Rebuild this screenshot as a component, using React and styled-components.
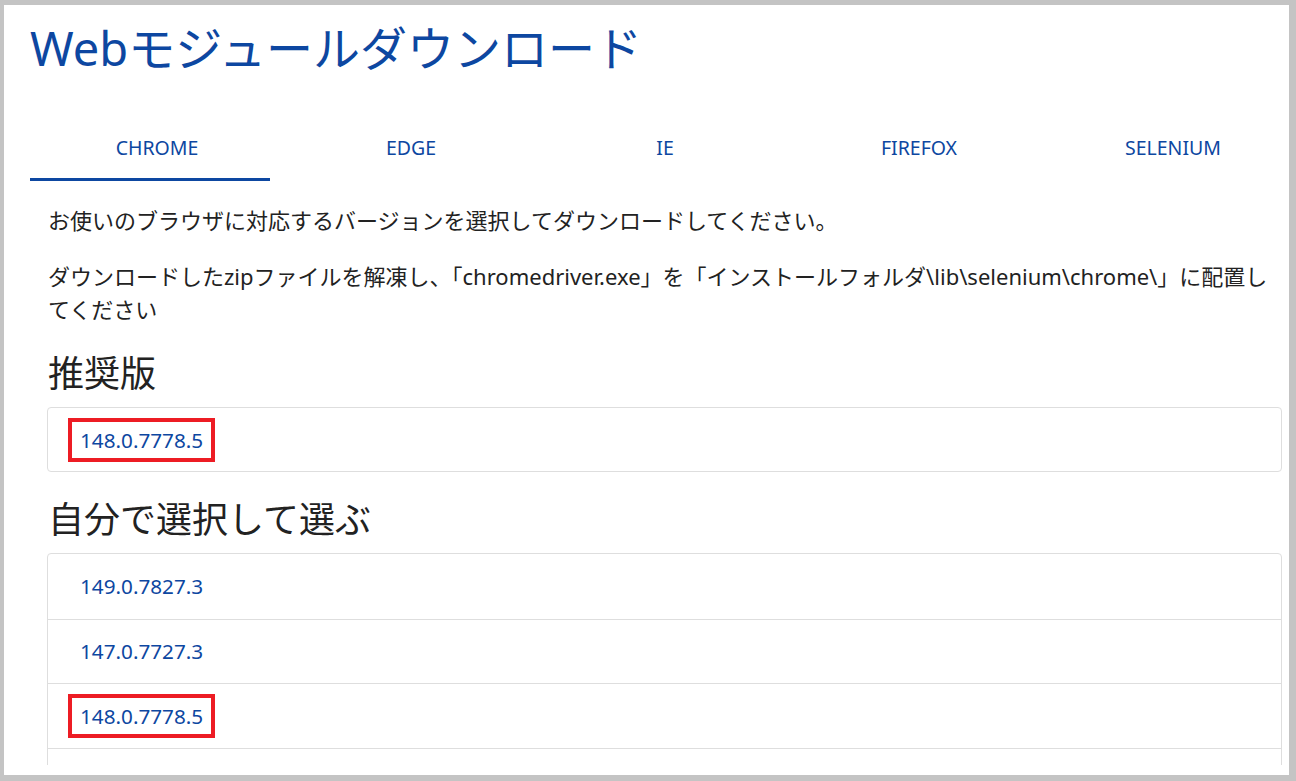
import React from 'react';
import styled, {createGlobalStyle, css} from 'styled-components';

const GlobalStyle = createGlobalStyle`
  * { box-sizing: border-box; }
  body {
    margin: 0;
    background: #ffffff;
    font-family: "Noto Sans", "Noto Sans CJK JP", sans-serif;
  }
`

const Frame = styled.div`
  width: 1296px;
  height: 781px;
  border-style: solid;
  border-color: #c4c4c4;
  border-width: 5px 7px 6px 4px;
  background: #ffffff;
  padding-bottom: 10px;
`

const Viewport = styled.div`
  height: 100%;
  overflow: hidden;
`

const Title = styled.h1`
  margin: 13px 0 0;
  padding-left: 26px;
  font-size: 47px;
  line-height: 60px;
  font-weight: 400;
  color: #0d47a1;
`

const TabBar = styled.div`
  display: flex;
  margin: 31px 0 0 26px;
`

const Tab = styled.div`
  position: relative;
  flex: 0 0 254px;
  height: 72px;
  padding-top: 4px;
  display: flex;
  align-items: center;
  justify-content: center;
  font-size: 19.5px;
  color: #0d47a1;
  text-transform: uppercase;

  ${props => props.active && css`
    &::after {
      content: "";
      position: absolute;
      left: 0;
      bottom: 0;
      width: 240px;
      height: 3px;
      background: #0d47a1;
    }
  `}
`

const Body = styled.div`
  padding: 0 7px 0 43px;
`

const Text = styled.p`
  margin: 23px 0 0;
  padding-left: 1px;
  font-size: 22px;
  line-height: 33px;
  color: #222;
`

const Heading = styled.h2`
  margin: 26px 0 0;
  padding-left: 1px;
  font-size: 36px;
  line-height: 44px;
  font-weight: 400;
  color: #222;
`

const Card = styled.div`
  margin-top: 11px;
  border: 1px solid #dedede;
  border-radius: 4px;
  background: #ffffff;
`

const Row = styled.div`
  height: ${props => props.h || 64.5}px;
  display: flex;
  align-items: center;
  padding-left: 32px;
  & + & {
    border-top: 1px solid #dedede;
  }
`

const VersionLink = styled.a`
  position: relative;
  font-size: 20.7px;
  line-height: 26px;
  color: #0d47a1;
  text-decoration: none;

  ${props => props.marked && css`
    &::after {
      content: "";
      position: absolute;
      left: -12px;
      right: -12px;
      top: -9px;
      bottom: -9px;
      border: 4px solid #ed1c24;
    }
  `}
`

const tabs = ['Chrome', 'Edge', 'IE', 'Firefox', 'Selenium'];

// the last row is scrolled below the visible area
const versions = [
    {v: '149.0.7827.3'},
    {v: '147.0.7727.3'},
    {v: '148.0.7778.5', marked: true},
    {v: ''},
];

function App() {
    return (
        <Frame>
            <GlobalStyle />
            <Viewport>
                <Title>Webモジュールダウンロード</Title>
                <TabBar>
                    {tabs.map((t, i) => (
                        <Tab key={t} active={i === 0}>{t}</Tab>
                    ))}
                </TabBar>
                <Body>
                    <Text>お使いのブラウザに対応するバージョンを選択してダウンロードしてください。</Text>
                    <Text>ダウンロードしたzipファイルを解凍し、「chromedriver.exe」を「インストールフォルダ\lib\selenium\chrome\」に配置してください</Text>
                    <Heading>推奨版</Heading>
                    <Card>
                        <Row h={63}>
                            <VersionLink href="#" marked>148.0.7778.5</VersionLink>
                        </Row>
                    </Card>
                    <Heading>自分で選択して選ぶ</Heading>
                    <Card>
                        {versions.map((item, i) => (
                            <Row key={i}>
                                {item.v && <VersionLink href="#" marked={item.marked}>{item.v}</VersionLink>}
                            </Row>
                        ))}
                    </Card>
                </Body>
            </Viewport>
        </Frame>
    );
}

export default App;
